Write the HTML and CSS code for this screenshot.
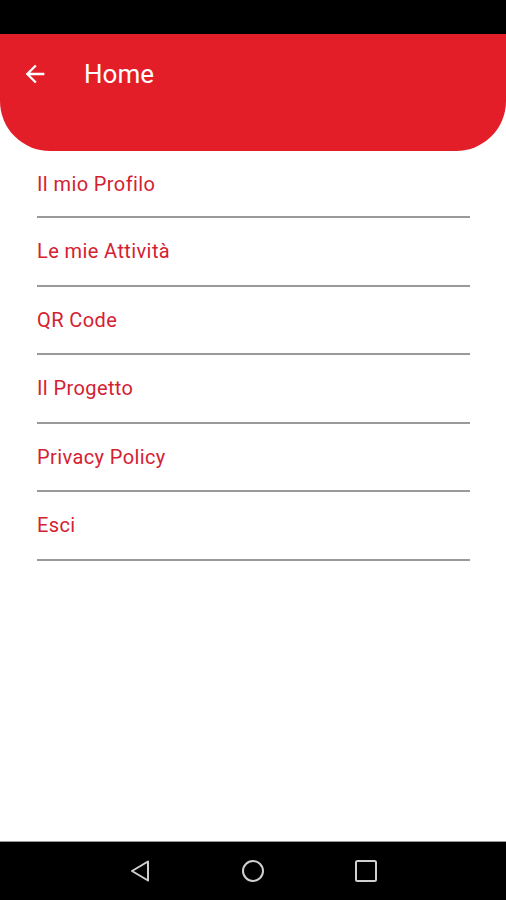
FILE: index.html
```html
<!DOCTYPE html>
<html lang="it">
<head>
    <meta charset="UTF-8">
    <meta name="viewport" content="width=device-width, initial-scale=1.0">
    <title>Home</title>
    <link rel="stylesheet" href="styles.css">
</head>
<body>
    <div class="status-bar"></div>

    <header class="app-bar">
        <div class="toolbar">
            <button class="back" aria-label="Indietro">
                <svg width="24" height="24" viewBox="0 0 24 24">
                    <path d="M20 11H7.83l5.59-5.59L12 4l-8 8 8 8 1.41-1.41L7.83 13H20v-2z" fill="#fff"/>
                </svg>
            </button>
            <h1>Home</h1>
        </div>
    </header>

    <main class="menu">
        <a class="menu-item" href="#">Il mio Profilo</a>
        <a class="menu-item" href="#">Le mie Attività</a>
        <a class="menu-item" href="#">QR Code</a>
        <a class="menu-item" href="#">Il Progetto</a>
        <a class="menu-item" href="#">Privacy Policy</a>
        <a class="menu-item" href="#">Esci</a>
    </main>

    <nav class="nav-bar">
        <svg width="24" height="24" viewBox="0 0 24 24">
            <path d="M20 2.5 L4 12 L20 21.5 Z" fill="none" stroke="#d0d0d0" stroke-width="2" stroke-linejoin="round"/>
        </svg>
        <svg width="24" height="24" viewBox="0 0 24 24">
            <circle cx="12" cy="12" r="10" fill="none" stroke="#d0d0d0" stroke-width="2"/>
        </svg>
        <svg width="24" height="24" viewBox="0 0 24 24">
            <rect x="2" y="2" width="20" height="20" rx="1.5" fill="none" stroke="#d0d0d0" stroke-width="2"/>
        </svg>
    </nav>
</body>
</html>
```

FILE: styles.css
```css
* {
    margin: 0;
    padding: 0;
    box-sizing: border-box;
}

body {
    font-family: Roboto, 'Noto Sans', sans-serif;
    width: 506px;
    height: 900px;
    background: #fff;
    display: flex;
    flex-direction: column;
    overflow: hidden;
}

.status-bar {
    height: 34px;
    background: #000;
    flex-shrink: 0;
}

.app-bar {
    height: 117px;
    background: #e31e29;
    border-radius: 0 0 50px 50px;
    flex-shrink: 0;
}

.toolbar {
    height: 80px;
    display: flex;
    align-items: center;
    padding-left: 21px;
}

.back {
    width: 28px;
    height: 28px;
    border: none;
    background: none;
    display: flex;
    align-items: center;
    justify-content: center;
}

.back svg {
    width: 28px;
    height: 28px;
}

.toolbar h1 {
    margin-left: 35px;
    font-size: 26px;
    font-weight: 400;
    color: #fff;
}

.menu {
    flex: 1;
    padding: 0 36px 0 37px;
    display: flex;
    flex-direction: column;
}

.menu-item {
    display: flex;
    align-items: center;
    height: 68.5px;
    padding-bottom: 0;
    font-size: 20px;
    letter-spacing: 0.4px;
    color: #d42131;
    text-decoration: none;
    border-bottom: 2px solid #9a9a9a;
    flex-shrink: 0;
}

.menu-item:first-child {
    height: 67px;
    padding-bottom: 0;
}

.nav-bar {
    height: 59px;
    background: #000;
    border-top: 1px solid #9a9a9a;
    display: flex;
    align-items: center;
    justify-content: center;
    gap: 89px;
    flex-shrink: 0;
}
```
